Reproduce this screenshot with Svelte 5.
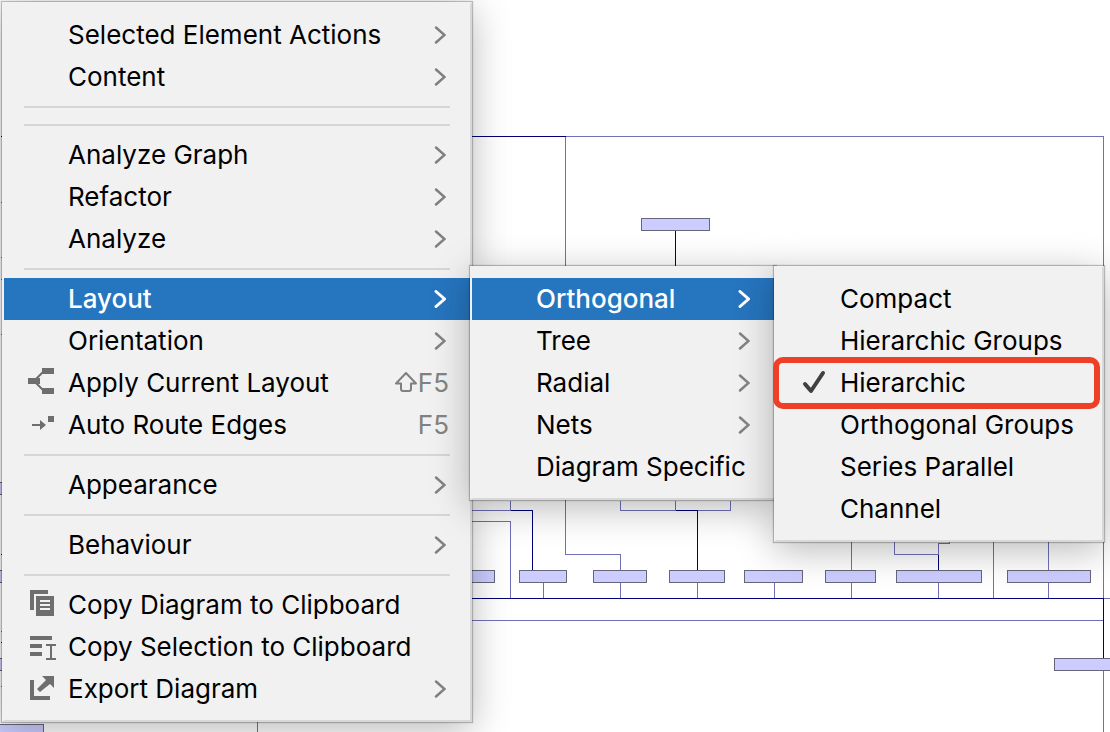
<script lang="ts">
  type IconName = 'layout' | 'route' | 'copy' | 'selection' | 'export' | 'check';

  interface MenuItem {
    label: string;
    icon?: IconName;
    shortcut?: string;
    shift?: boolean;
    more?: boolean;
    marked?: boolean;
    children?: MenuEntry[];
  }

  type MenuEntry = MenuItem | 'separator';

  const layouts: MenuEntry[] = [
    { label: 'Compact' },
    { label: 'Hierarchic Groups' },
    { label: 'Hierarchic', icon: 'check', marked: true },
    { label: 'Orthogonal Groups' },
    { label: 'Series Parallel' },
    { label: 'Channel' },
  ];

  const layoutKinds: MenuEntry[] = [
    { label: 'Orthogonal', more: true, children: layouts },
    { label: 'Tree', more: true },
    { label: 'Radial', more: true },
    { label: 'Nets', more: true },
    { label: 'Diagram Specific' },
  ];

  const mainMenu: MenuEntry[] = [
    { label: 'Selected Element Actions', more: true },
    { label: 'Content', more: true },
    'separator',
    'separator',
    { label: 'Analyze Graph', more: true },
    { label: 'Refactor', more: true },
    { label: 'Analyze', more: true },
    'separator',
    { label: 'Layout', more: true, children: layoutKinds },
    { label: 'Orientation', more: true },
    { label: 'Apply Current Layout', icon: 'layout', shortcut: 'F5', shift: true },
    { label: 'Auto Route Edges', icon: 'route', shortcut: 'F5' },
    'separator',
    { label: 'Appearance', more: true },
    'separator',
    { label: 'Behaviour', more: true },
    'separator',
    { label: 'Copy Diagram to Clipboard', icon: 'copy' },
    { label: 'Copy Selection to Clipboard', icon: 'selection' },
    { label: 'Export Diagram', icon: 'export', more: true },
  ];

  // x, y, width of every diagram node, all are 12 high
  const nodes = [
    [641, 218, 68],
    [460, 570, 34],
    [519, 570, 47],
    [593, 570, 53],
    [669, 570, 55],
    [744, 570, 58],
    [825, 570, 50],
    [896, 570, 85],
    [1007, 570, 83],
    [1054, 658, 70],
    [-40, 482, 60],
    [-40, 570, 60],
    [-40, 658, 60],
    [-40, 724, 83],
  ];

  const lightEdges = [
    'M565 136H1103V598',
    'M565 136V554H620V570',
    'M470 510H510V500',
    'M470 521H510V598',
    'M620 500V510H730V500M675 500V510',
    'M543 582V598M620 582V598M697 582V598M774 582V598M851 540V570M851 582V598',
    'M894 540V554H938M949 540V543H938V554M938 582V598',
    'M993 540V598M1048 540V570M1048 582V598',
    'M470 620H1103M1103 598H1110M1103 670V732',
    'M0 202H10M0 257H10M0 279H10M0 334H10M0 631H10M0 686H10M257 715V732',
  ];

  const darkEdges = [
    'M0 136H565',
    'M675 230V270',
    'M510 510H532V570',
    'M675 510H697V570',
    'M938 554V570',
    'M470 598H1103V658',
    'M0 554H10M0 642H10',
  ];
</script>

{#snippet icon(name: IconName)}
  <svg class="icon" viewBox="0 0 32 32" aria-hidden="true">
    {#if name === 'layout'}
      <path d="M4 11h12v6H4zM18 1h12v6H18zM18 21h12v6H18z" />
      <path class="line" d="M10 14L20 4M10 14L20 24" />
    {:else if name === 'route'}
      <path d="M24 7h6v6h-6zM16 11l6 5-6 5zM8 15h9v2H8z" />
    {:else if name === 'copy'}
      <path d="M6 1h18v4H10v16H6z" />
      <path fill-rule="evenodd" d="M12 7h18v20H12zM16 11v2h10v-2zM16 15v2h10v-2zM16 19v2h10v-2z" />
    {:else if name === 'selection'}
      <path d="M6 5h22v4H6zM6 13h12v4H6zM6 21h12v4H6zM22 13h10v2h-4v12h4v2H22v-2h4V15h-4z" />
    {:else if name === 'export'}
      <path d="M6 7h4v16h16v4H6zM18 3h12v12l-4-4-10 8-3-3 9-9z" />
    {:else}
      <path class="tick" d="M9 17l6 7L27 6" />
    {/if}
  </svg>
{/snippet}

{#snippet menu(entries: MenuEntry[], level: string)}
  <ul class="menu {level}" role="menu">
    {#each entries as entry}
      {#if entry === 'separator'}
        <li class="separator" role="separator"></li>
      {:else}
        <li class="entry" class:open={entry.children} class:marked={entry.marked} role="none">
          <button class="item" role="menuitem" aria-haspopup={entry.more ? 'menu' : undefined}>
            <span class="gutter">
              {#if entry.icon}{@render icon(entry.icon)}{/if}
            </span>
            <span class="label">{entry.label}</span>
            {#if entry.shortcut}
              <span class="shortcut">
                {#if entry.shift}
                  <svg class="shift" viewBox="0 0 24 22" aria-label="Shift">
                    <path d="M12 2L2 12.500h5V18q0 2 2 2h6q2 0 2-2v-5.500h5z" />
                  </svg>
                {/if}
                {entry.shortcut}
              </span>
            {/if}
            {#if entry.more}
              <svg class="chevron" viewBox="0 0 12 18" aria-hidden="true">
                <path d="M2 1.500L10.500 9L2 16.500" />
              </svg>
            {/if}
          </button>
          {#if entry.children}
            {@render menu(entry.children, level === 'main' ? 'second' : 'third')}
          {/if}
        </li>
      {/if}
    {/each}
  </ul>
{/snippet}

<main>
  <svg class="diagram" aria-hidden="true">
    {#each lightEdges as d}
      <path class="edge" {d} />
    {/each}
    {#each darkEdges as d}
      <path class="edge dark" {d} />
    {/each}
    {#each nodes as [x, y, width]}
      <rect class="node" {x} {y} {width} height="12" />
    {/each}
  </svg>
  {@render menu(mainMenu, 'main')}
</main>

<style>
  :global(body) {
    margin: 0;
    background: #fff;
  }

  main {
    position: relative;
    box-sizing: border-box;
    min-height: 100vh;
    padding: 2px;
    overflow: hidden;
    font-family: Inter, 'Liberation Sans', sans-serif;
    font-size: 26px;
  }

  .diagram {
    position: absolute;
    inset: 0;
    width: 100%;
    height: 100%;
  }

  .edge {
    fill: none;
    stroke: #7070b8;
    shape-rendering: crispEdges;
    transform: translate(0.5px, 0.5px);
  }

  .edge.dark {
    stroke: #000078;
  }

  .node {
    fill: #ccccff;
    stroke: #66667a;
    shape-rendering: crispEdges;
    transform: translate(0.5px, 0.5px);
  }

  /* flex column so that adjoining separators keep both margins */
  .menu {
    position: relative;
    display: flex;
    flex-direction: column;
    box-sizing: border-box;
    width: max-content;
    margin: 0;
    padding: 10px 0;
    border: 2px solid #f1f1f1;
    border-right-color: #d8d8d8;
    border-bottom-color: #d8d8d8;
    background: #f1f1f1;
    box-shadow: 0 0 1px 1px rgba(0, 0, 0, 0.24), 0 8px 36px rgba(0, 0, 0, 0.28);
    list-style: none;
  }

  .main {
    min-width: 470px;
  }

  .second,
  .third {
    position: absolute;
    top: -12px;
    left: 100%;
  }

  .second {
    min-width: 306px;
  }

  .third {
    min-width: 330px;
  }

  .entry {
    position: relative;
  }

  .item {
    display: flex;
    align-items: center;
    box-sizing: border-box;
    width: 100%;
    height: 42px;
    padding: 0 21px 0 20px;
    border: 0;
    background: none;
    color: #000;
    font: inherit;
    text-align: left;
    white-space: nowrap;
  }

  .open > .item {
    background: #2675bf;
    color: #fff;
    font-weight: 500;
  }

  .gutter {
    flex: none;
    width: 44px;
    height: 32px;
  }

  .label {
    flex: 1;
    padding-bottom: 2px;
  }

  .icon {
    display: block;
    width: 32px;
    height: 32px;
    fill: #6e6e6e;
  }

  .icon .line {
    fill: none;
    stroke: #6e6e6e;
    stroke-width: 2;
  }

  .icon .tick {
    fill: none;
    stroke: #404040;
    stroke-width: 4;
    stroke-linecap: round;
    stroke-linejoin: round;
  }

  .shortcut {
    display: flex;
    align-items: center;
    padding-bottom: 2px;
    color: #808080;
  }

  .shift {
    width: 24px;
    height: 22px;
    fill: none;
    stroke: #808080;
    stroke-width: 2;
    stroke-linejoin: round;
  }

  .chevron {
    flex: none;
    width: 12px;
    height: 18px;
    margin-right: 3px;
    fill: none;
    stroke: #808080;
    stroke-width: 2.5;
    stroke-linecap: round;
  }

  .open > .item .chevron {
    stroke: #fff;
    stroke-width: 3;
  }

  .separator {
    height: 2px;
    margin: 8px 20px;
    background: #d6d6d6;
  }

  /* red annotation frame round the chosen entry */
  .marked::after {
    content: '';
    position: absolute;
    inset: -5px 2px -5px -3px;
    border: 6px solid #ee4026;
    border-radius: 10px;
    pointer-events: none;
  }
</style>
